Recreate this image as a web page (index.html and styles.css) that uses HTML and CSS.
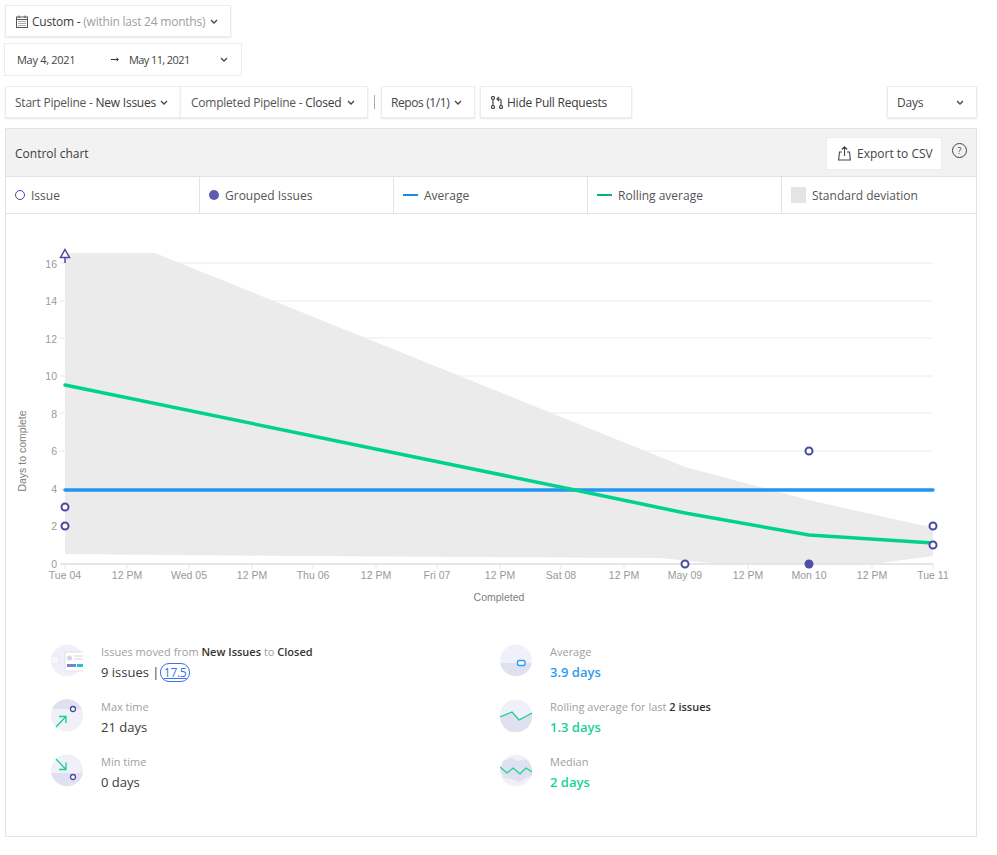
FILE: index.html
```html
<!DOCTYPE html>
<html lang="en">
<head>
  <meta charset="UTF-8" />
  <meta name="viewport" content="width=device-width, initial-scale=1.0"/>
  <title>Control chart</title>
  <link rel="stylesheet" href="styles.css">
</head>
<body>

  <div class="range-row">
    <button class="btn range-btn">
      <svg class="icon" width="12" height="13" viewBox="0 0 12 13" fill="none" stroke="#555">
        <rect x="0.500" y="2" width="11" height="10.500"/>
        <path d="M0.500 4.500h11M3 0.500v2.500M9 0.500v2.500"/>
        <path d="M2.500 6.500h7M2.500 8.500h7M2.500 10.500h7" stroke-dasharray="1 1"/>
      </svg>
      <span class="label"><span class="strong">Custom -</span> <span class="muted">(within last 24 months)</span></span>
      <svg class="caret" width="8" height="5" viewBox="0 0 8 5"><path d="M1 1l3 3 3-3" fill="none" stroke="#444" stroke-width="1.300"/></svg>
    </button>
  </div>

  <div class="date-row">
    <div class="date-box">
      <span class="date-from">May 4, 2021</span>
      <svg class="date-arrow" width="8" height="5" viewBox="0 0 8 5"><path d="M0 2.500h7M5.500 1l2 1.500-2 1.500" fill="none" stroke="#333"/></svg>
      <span class="date-to">May 11, 2021</span>
      <svg class="caret" width="8" height="5" viewBox="0 0 8 5"><path d="M1 1l3 3 3-3" fill="none" stroke="#444" stroke-width="1.300"/></svg>
    </div>
  </div>

  <div class="filter-row">
    <button class="btn pipe-start">
      <span class="label"><span class="soft">Start Pipeline -</span> <span class="strong">New Issues</span></span>
      <svg class="caret" width="8" height="5" viewBox="0 0 8 5"><path d="M1 1l3 3 3-3" fill="none" stroke="#444" stroke-width="1.300"/></svg>
    </button>
    <button class="btn pipe-end">
      <span class="label"><span class="soft">Completed Pipeline -</span> <span class="strong">Closed</span></span>
      <svg class="caret" width="8" height="5" viewBox="0 0 8 5"><path d="M1 1l3 3 3-3" fill="none" stroke="#444" stroke-width="1.300"/></svg>
    </button>
    <span class="divider"></span>
    <button class="btn repos">
      <span class="label">Repos (1/1)</span>
      <svg class="caret" width="8" height="5" viewBox="0 0 8 5"><path d="M1 1l3 3 3-3" fill="none" stroke="#444" stroke-width="1.300"/></svg>
    </button>
    <button class="btn hide-pr">
      <svg class="icon" width="12" height="13" viewBox="0 0 12 13" fill="none" stroke="#444" stroke-width="1.200">
        <circle cx="2" cy="2" r="1.500"/><circle cx="2" cy="11" r="1.500"/><circle cx="10" cy="11" r="1.500"/>
        <path d="M2 3.500v6M10 9.500V4.500q0-1.500-1.500-1.500H6.500M8 1L6 3l2 2"/>
      </svg>
      <span class="label strong">Hide Pull Requests</span>
    </button>
    <button class="btn days">
      <span class="label">Days</span>
      <svg class="caret" width="8" height="5" viewBox="0 0 8 5"><path d="M1 1l3 3 3-3" fill="none" stroke="#444" stroke-width="1.300"/></svg>
    </button>
  </div>

  <section class="panel">
    <header class="panel-head">
      <h2 class="panel-title">Control chart</h2>
      <button class="export">
        <svg class="icon" width="13" height="15" viewBox="0 0 13 15" fill="none" stroke="#444" stroke-width="1.100">
          <path d="M6.500 10V1M3.800 3.500L6.500 0.800l2.700 2.700M4 6H1.500L0.600 14h11.800L11.500 6H9"/>
        </svg>
        <span class="label">Export to CSV</span>
      </button>
      <span class="help">?</span>
    </header>

    <div class="legend">
      <div class="legend-item"><span class="key-ring"></span>Issue</div>
      <div class="legend-item"><span class="key-dot"></span>Grouped Issues</div>
      <div class="legend-item"><span class="key-line key-blue"></span>Average</div>
      <div class="legend-item"><span class="key-line key-green"></span>Rolling average</div>
      <div class="legend-item"><span class="key-box"></span>Standard deviation</div>
    </div>

    <svg class="chart" width="970" height="400" viewBox="6 214 970 400">
      <g class="grid">
        <path d="M65 263H933M65 301H933M65 338H933M65 376H933M65 413H933M65 451H933M65 489H933M65 526H933"/>
      </g>
      <polygon class="band" points="65,253 155,253 685,467 809,500 933,528 933,556 873,564 720,564 660,558 300,556 65,554"/>
      <g class="axis-ticks">
        <path d="M60 263H65M60 301H65M60 338H65M60 376H65M60 413H65M60 451H65M60 489H65M60 526H65"/>
        <path d="M65 564V569M127 564V569M189 564V569M252 564V569M313 564V569M376 564V569M437 564V569M500 564V569M561 564V569M624 564V569M685 564V569M748 564V569M809 564V569M872 564V569M933 564V569"/>
      </g>
      <path class="axis-line" d="M60 564H933"/>
      <g class="y-labels">
        <text x="57" y="268">16</text><text x="57" y="305">14</text><text x="57" y="343">12</text><text x="57" y="380">10</text>
        <text x="57" y="418">8</text><text x="57" y="455">6</text><text x="57" y="493">4</text><text x="57" y="530">2</text><text x="57" y="568">0</text>
      </g>
      <g class="x-labels">
        <text x="65" y="579">Tue 04</text><text x="127" y="579">12 PM</text><text x="189" y="579">Wed 05</text><text x="252" y="579">12 PM</text>
        <text x="313" y="579">Thu 06</text><text x="376" y="579">12 PM</text><text x="437" y="579">Fri 07</text><text x="500" y="579">12 PM</text>
        <text x="561" y="579">Sat 08</text><text x="624" y="579">12 PM</text><text x="685" y="579">May 09</text><text x="748" y="579">12 PM</text>
        <text x="809" y="579">Mon 10</text><text x="872" y="579">12 PM</text><text x="933" y="579">Tue 11</text>
      </g>
      <text class="axis-title" x="499" y="601">Completed</text>
      <text class="axis-title" transform="translate(26 451) rotate(-90)">Days to complete</text>
      <path class="avg-line" d="M65 490H933"/>
      <polyline class="roll-line" points="65,385 575,490 685,513 809,535 933,543"/>
      <path class="outlier" d="M65 263V257M60.500 257.500L65 249.500L69.500 257.500Z"/>
      <g class="points">
        <circle cx="65" cy="507" r="3.500"/><circle cx="65" cy="526" r="3.500"/><circle cx="685" cy="564" r="3.500"/>
        <circle cx="809" cy="451" r="3.500"/><circle cx="933" cy="526" r="3.500"/><circle cx="933" cy="545" r="3.500"/>
      </g>
      <circle class="point-group" cx="809" cy="564" r="4.500"/>
    </svg>

    <div class="stats">
      <div class="stat">
        <svg class="stat-icon" width="32" height="33" viewBox="0 0 32 33">
          <circle cx="16" cy="16.500" r="16" fill="#f0f1f8"/>
          <path d="M1 12h7v8H1" fill="#f7f7fb" stroke="#e6e6ee"/>
          <path d="M32 8H14v19h18" fill="#fff" stroke="#e0e0e8"/>
          <circle cx="18.500" cy="14" r="2.500" fill="#d5d5dd"/>
          <path d="M23 12h9M23 15h9" stroke="#d5d5dd"/>
          <rect x="16" y="20" width="9" height="3" fill="#6f86d6"/><rect x="26" y="20" width="6" height="3" fill="#1fc2d8"/>
        </svg>
        <div>
          <div class="stat-label">Issues moved from <b>New Issues</b> to <b>Closed</b></div>
          <div class="stat-value">9 issues | <a class="pill">17.5</a></div>
        </div>
      </div>
      <div class="stat">
        <svg class="stat-icon" width="32" height="33" viewBox="0 0 32 33">
          <circle cx="16" cy="16.500" r="16" fill="#f0f1f8"/>
          <path d="M0.300 19h31.400A16 16 0 0 1 0.300 19z" fill="#dfe0f0"/>
          <rect x="17.500" y="16.500" width="7.500" height="5" rx="1.800" fill="#fff" stroke="#2e9bf0" stroke-width="1.400"/>
        </svg>
        <div>
          <div class="stat-label">Average</div>
          <div class="stat-value num blue">3.9 days</div>
        </div>
      </div>
      <div class="stat">
        <svg class="stat-icon" width="32" height="33" viewBox="0 0 32 33">
          <circle cx="16" cy="16.500" r="16" fill="#f0f1f8"/>
          <path d="M1.200 10h29.600A16 16 0 0 0 1.200 10z" fill="#dfe0f0"/>
          <path d="M5 28L15 17.500M8 17.500h7V24" fill="none" stroke="#11d291" stroke-width="1.300"/>
          <circle cx="22" cy="10" r="2.500" fill="#fff" stroke="#4a4a9c" stroke-width="1.300"/>
        </svg>
        <div>
          <div class="stat-label">Max time</div>
          <div class="stat-value">21 days</div>
        </div>
      </div>
      <div class="stat">
        <svg class="stat-icon" width="32" height="33" viewBox="0 0 32 33">
          <circle cx="16" cy="16.500" r="16" fill="#f0f1f8"/>
          <path d="M0 18l12-5 7 8 13-7v3A16 16 0 0 1 0 18z" fill="#dfe0f0"/>
          <path d="M0 18l12-5 7 8 13-7" fill="none" stroke="#11d291" stroke-width="1.300"/>
        </svg>
        <div>
          <div class="stat-label">Rolling average for last <b>2 issues</b></div>
          <div class="stat-value num green">1.3 days</div>
        </div>
      </div>
      <div class="stat">
        <svg class="stat-icon" width="32" height="33" viewBox="0 0 32 33">
          <circle cx="16" cy="16.500" r="16" fill="#f0f1f8"/>
          <path d="M0.300 19h31.400A16 16 0 0 1 0.300 19z" fill="#dfe0f0"/>
          <path d="M5 5L15 15.500M15 8.500v7H8" fill="none" stroke="#11d291" stroke-width="1.300"/>
          <circle cx="22" cy="23" r="2.500" fill="#fff" stroke="#4a4a9c" stroke-width="1.300"/>
        </svg>
        <div>
          <div class="stat-label">Min time</div>
          <div class="stat-value">0 days</div>
        </div>
      </div>
      <div class="stat">
        <svg class="stat-icon" width="32" height="33" viewBox="0 0 32 33">
          <circle cx="16" cy="16.500" r="16" fill="#f0f1f8"/>
          <path d="M3 7l8-3 7 3 7-2 4 3 3 6v8l-6 2-7 4-7-3-8-1-4-9z" fill="#dfe0f0"/>
          <path d="M0 13l7 6 6-5 7 6 6-6 6 4" fill="none" stroke="#11d291" stroke-width="1.200"/>
        </svg>
        <div>
          <div class="stat-label">Median</div>
          <div class="stat-value num green">2 days</div>
        </div>
      </div>
    </div>
  </section>

</body>
</html>
```

FILE: styles.css
```css
body {
  margin: 0;
  width: 997px;
  height: 855px;
  overflow: hidden;
  background-color: #fff;
  font-family: "Open Sans", sans-serif;
  font-size: 12px;
  color: #444;
}
button {
  font-family: inherit;
  font-size: 12px;
  color: #444;
  cursor: pointer;
}
.btn {
  display: flex;
  align-items: center;
  gap: 4px;
  height: 32px;
  padding: 0 12px 0 9px;
  background-color: #fff;
  border: 1px solid #ececec;
  box-shadow: 0 1px 2px rgba(0, 0, 0, 0.1);
  letter-spacing: -0.23px;
  white-space: nowrap;
}
.icon {
  flex: none;
}
.caret {
  flex: none;
  margin-left: auto;
}
.strong {
  color: #3a3a3a;
  font-weight: 500;
}
.soft {
  color: #555;
}
.muted {
  color: #a0a0a0;
  font-weight: 500;
}
.range-row {
  padding: 5px 0 0 5px;
}
.range-btn {
  width: 226px;
  padding-left: 10px;
}
.date-row {
  padding: 6px 0 0 4px;
}
.date-box {
  display: flex;
  align-items: center;
  width: 238px;
  height: 33px;
  box-sizing: border-box;
  padding: 0 13px 0 12px;
  border: 1px solid #ececec;
  font-size: 11px;
  letter-spacing: -0.3px;
}
.date-from {
  width: 94px;
}
.date-arrow {
  flex: none;
  margin-right: 10px;
}
.date-to {
  letter-spacing: -0.6px;
}
.filter-row {
  display: flex;
  align-items: center;
  margin: 10px 20px 10px 5px;
}
.pipe-start {
  width: 176px;
}
.pipe-end {
  width: 188px;
  margin-left: -1px;
  padding-left: 10px;
}
.divider {
  width: 1px;
  height: 14px;
  margin: 0 6px 0 6px;
  background-color: #aaa;
}
.repos {
  width: 94px;
  letter-spacing: -0.4px;
}
.hide-pr {
  width: 152px;
  margin-left: 5px;
  padding-left: 10px;
}
.days {
  width: 90px;
  margin-left: auto;
}
.panel {
  width: 972px;
  height: 709px;
  box-sizing: border-box;
  margin-left: 5px;
  border: 1px solid #e4e4e4;
}
.panel-head {
  display: flex;
  align-items: center;
  height: 48px;
  box-sizing: border-box;
  padding: 1px 9px 0 9px;
  background-color: #f2f2f2;
  border-bottom: 1px solid #e4e4e4;
}
.panel-title {
  margin: 0;
  font-size: 12px;
  font-weight: 500;
  color: #3a3a3a;
}
.export {
  display: flex;
  align-items: center;
  gap: 6px;
  height: 33px;
  width: 116px;
  box-sizing: border-box;
  padding: 0 0 0 11px;
  margin: 0 10px 0 auto;
  background-color: #fff;
  border: 1px solid #ececec;
  white-space: nowrap;
}
.help {
  width: 13px;
  height: 13px;
  margin-top: -6px;
  border: 1px solid #444;
  border-radius: 50%;
  font-size: 9px;
  line-height: 13px;
  text-align: center;
}
.legend {
  display: grid;
  grid-template-columns: 193px 194px 194px 194px 1fr;
  height: 37px;
  box-sizing: border-box;
  border-bottom: 1px solid #e4e4e4;
}
.legend-item {
  display: flex;
  align-items: center;
  gap: 6px;
  padding-left: 9px;
  border-left: 1px solid #e4e4e4;
  color: #555;
}
.legend-item:first-child {
  border-left: 0;
}
.key-ring {
  width: 8px;
  height: 8px;
  border: 1px solid #4a4a9c;
  border-radius: 50%;
}
.key-dot {
  width: 10px;
  height: 10px;
  background-color: #5c5cb0;
  border-radius: 50%;
}
.key-line {
  width: 15px;
  height: 2px;
}
.key-blue {
  background-color: #1e88e5;
}
.key-green {
  background-color: #00b386;
}
.key-box {
  width: 15px;
  height: 16px;
  background-color: #e4e4e4;
}
.chart {
  display: block;
}
.chart text {
  font-family: "Liberation Sans", sans-serif;
  font-size: 10.500px;
  fill: #999;
}
.grid path {
  stroke: #ececec;
  fill: none;
}
.band {
  fill: #ebebeb;
}
.axis-ticks path {
  stroke: #e6e6e6;
  fill: none;
}
.axis-line {
  stroke: #e6e6e6;
  stroke-width: 2;
}
.y-labels text {
  text-anchor: end;
}
.x-labels text,
.axis-title {
  text-anchor: middle;
}
.chart .axis-title {
  fill: #808080;
}
.avg-line {
  stroke: #2196f3;
  stroke-width: 3.500;
  stroke-linecap: round;
  fill: none;
}
.roll-line {
  stroke: #00d28e;
  stroke-width: 3.500;
  stroke-linecap: round;
  stroke-linejoin: round;
  fill: none;
}
.outlier {
  stroke: #4a4a9c;
  stroke-width: 1.500;
  fill: #fff;
}
.points circle {
  fill: #fff;
  stroke: #4a4a9c;
  stroke-width: 2;
}
.point-group {
  fill: #5050a8;
}
.stats {
  display: grid;
  grid-template-columns: 449px 1fr;
  grid-auto-rows: 55px;
  padding-left: 45px;
  margin-top: 30px;
}
.stat {
  display: flex;
  gap: 18px;
}
.stat-icon {
  flex: none;
}
.stat-label {
  font-size: 11px;
  line-height: 16px;
  color: #a0a0a0;
}
.stat-label b {
  color: #333;
  font-weight: 600;
}
.stat-value {
  margin-top: 1px;
  font-size: 13px;
  line-height: 22px;
  color: #3a3a3a;
  font-weight: 500;
}
.num {
  font-weight: 600;
}
.blue {
  color: #2e9bf0;
}
.green {
  color: #14d494;
}
.pill {
  margin-left: -3px;
  padding: 0 3px;
  border: 1px solid #3b6ff0;
  border-radius: 9px;
  color: #3b6ff0;
  font-weight: 400;
  font-size: 12px;
  letter-spacing: -0.3px;
  text-decoration: underline;
}
```
